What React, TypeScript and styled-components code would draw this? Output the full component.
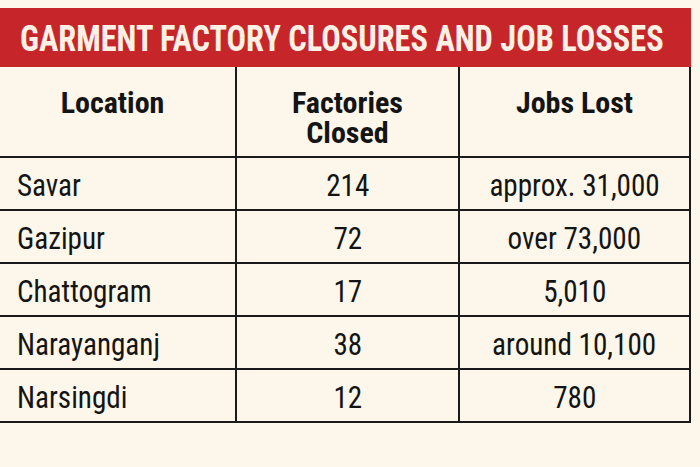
import React from "react";
import styled, { createGlobalStyle } from "styled-components";

const GlobalStyle = createGlobalStyle`
  html, body {
    margin: 0;
    padding: 0;
    background: #fcf7ea;
  }
  body {
    width: 700px;
    height: 467px;
    overflow: hidden;
    font-family: "Roboto Condensed", Roboto, "Liberation Sans", sans-serif;
    font-stretch: condensed;
    color: #141414;
  }
  * { box-sizing: border-box; }
`;

const Page = styled.div`
  padding-top: 8px;
  width: 700px;
  height: 467px;
  background: #fcf7ea;
`;

const Banner = styled.div`
  width: 691px;
  height: 59px;
  background: #c6262a;
  display: flex;
  align-items: center;
  justify-content: center;
  overflow: hidden;
  padding-top: 2px;
`;

const Title = styled.h1`
  margin: 0 0 0 -8px;
  flex: none;
  display: inline-block;
  white-space: nowrap;
  font-size: 37px;
  font-weight: 700;
  line-height: 1;
  color: #fdf1e6;
  transform: scaleX(0.875);
  transform-origin: center;
`;

const Table = styled.div`
  width: 691px;
  display: grid;
  grid-template-columns: 237px 223px 231px;
  grid-template-rows: 91px;
  grid-auto-rows: 53px;
`;

const Cell = styled.div<{ $head?: boolean; $left?: boolean }>`
  border-right: 2px solid #1a1a1a;
  border-bottom: 2px solid #1a1a1a;
  display: flex;
  align-items: ${(p) => (p.$head ? "flex-start" : "center")};
  justify-content: ${(p) => (p.$left ? "flex-start" : "center")};
  text-align: ${(p) => (p.$left ? "left" : "center")};
  padding: ${(p) => (p.$head ? "21px 0 0 0" : p.$left ? "2px 0 0 17px" : "2px 0 0 0")};
  font-size: ${(p) => (p.$head ? "30px" : "32px")};
  font-weight: ${(p) => (p.$head ? 700 : 400)};
  line-height: ${(p) => (p.$head ? "30px" : "1")};
  color: #141414;
  white-space: nowrap;
`;

const HeadLabel = styled.span<{ $shift?: number }>`
  margin-left: ${(p) => p.$shift ?? 0}px;
`;

const Value = styled.span<{ $left?: boolean }>`
  display: inline-block;
  transform: scaleX(0.91);
  transform-origin: ${(p) => (p.$left ? "left center" : "center")};
`;

const rows = [
  ["Savar", "214", "approx. 31,000"],
  ["Gazipur", "72", "over 73,000"],
  ["Chattogram", "17", "5,010"],
  ["Narayanganj", "38", "around 10,100"],
  ["Narsingdi", "12", "780"],
];

export default function App() {
  return (
    <>
      <GlobalStyle />
      <Page>
        <Banner>
          <Title>GARMENT FACTORY CLOSURES AND JOB LOSSES</Title>
        </Banner>
        <Table>
          <Cell $head>
            <HeadLabel $shift={-10}>Location</HeadLabel>
          </Cell>
          <Cell $head>
            <HeadLabel>
              Factories
              <br />
              Closed
            </HeadLabel>
          </Cell>
          <Cell $head>
            <HeadLabel>Jobs Lost</HeadLabel>
          </Cell>
          {rows.map((r) => (
            <React.Fragment key={r[0]}>
              <Cell $left>
                <Value $left>{r[0]}</Value>
              </Cell>
              <Cell>
                <Value>{r[1]}</Value>
              </Cell>
              <Cell>
                <Value>{r[2]}</Value>
              </Cell>
            </React.Fragment>
          ))}
        </Table>
      </Page>
    </>
  );
}
